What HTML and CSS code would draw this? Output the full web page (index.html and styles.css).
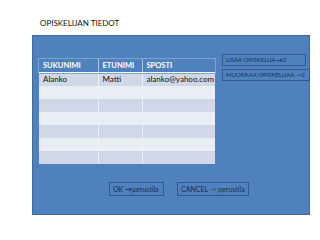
FILE: index.html
```html
<!DOCTYPE html>
<html>
<head>
<meta charset="utf-8">
<link rel="stylesheet" href="styles.css">
</head>
<body>
<div class="title">OPISKELIJAN TIEDOT</div>
<div class="panel">
  <div class="top">
    <table class="grid">
      <thead>
        <tr><th class="c1">SUKUNIMI</th><th class="c2">ETUNIMI</th><th class="c3">SPOSTI</th></tr>
      </thead>
      <tbody>
        <tr><td>Alanko</td><td>Matti</td><td>alanko@yahoo.com</td></tr>
        <tr><td></td><td></td><td></td></tr>
        <tr><td></td><td></td><td></td></tr>
        <tr><td></td><td></td><td></td></tr>
        <tr><td></td><td></td><td></td></tr>
        <tr><td></td><td></td><td></td></tr>
        <tr><td></td><td></td><td></td></tr>
      </tbody>
    </table>
    <div class="side">
      <div class="btn side-a">LISÄÄ OPISKELIJA <b>→</b>2</div>
      <div class="btn side-b">MUOKKAA OPISKELIJAA -&gt;2</div>
    </div>
  </div>
  <div class="bottom">
    <div class="btn ok">OK <b>→</b>perustila</div>
    <div class="btn cancel">CANCEL -&gt; perustila</div>
  </div>
</div>
</body>
</html>
```
FILE: styles.css
```css
html, body {
  margin: 0;
  padding: 0;
  background: #ffffff;
}
body {
  font-family: Lato, "Open Sans", "Liberation Sans", sans-serif;
  width: 320px;
  height: 240px;
  overflow: hidden;
}
.title {
  height: 35px;
  box-sizing: border-box;
  padding: 19px 0 0 40px;
  font-size: 8px;
  color: #111;
  line-height: 9px;
}
.panel {
  margin-left: 32px;
  width: 278px;
  height: 180px;
  box-sizing: border-box;
  background: #4f81bd;
  border: 1px solid #3f6a9c;
  padding: 23px 0 0 6px;
  display: flex;
  flex-direction: column;
}
.top {
  display: flex;
  align-items: flex-start;
}
.grid {
  border-collapse: collapse;
  width: 176px;
  table-layout: fixed;
  font-size: 8px;
}
.grid th, .grid td {
  height: 13px;
  padding: 0 0 0 4px;
  box-sizing: border-box;
  text-align: left;
  border-left: 1px solid #edf1f7;
  line-height: 13px;
  white-space: nowrap;
}
.grid th:first-child, .grid td:first-child {
  border-left: none;
}
.grid th {
  color: #ffffff;
  font-weight: bold;
  font-size: 7.5px;
  background: #4f81bd;
  border-left-color: #a9c0de;
  border-bottom: 1px solid #ffffff;
}
.grid thead tr {
  outline: 1px solid #7fa3d0;
}
.grid .c1 { width: 59px; }
.grid .c2 { width: 44px; }
.grid .c3 { width: 73px; }
.grid td {
  color: #111;
}
.grid tbody tr:nth-child(odd) { background: #d0d8e8; }
.grid tbody tr:nth-child(even) { background: #e9edf4; }
.side {
  margin-top: -5px;
  margin-left: 7px;
  display: flex;
  flex-direction: column;
  gap: 3px;
}
.btn {
  border: 1px solid #2f5a8c;
  color: #17305a;
  box-sizing: border-box;
  white-space: nowrap;
}
.btn b {
  font-weight: 900;
}
.side .btn {
  font-size: 6px;
  height: 12px;
  line-height: 10px;
  padding-left: 3px;
}
.side-a { width: 84px; }
.side-b { width: 88px; }
.bottom {
  display: flex;
  gap: 13px;
  padding-left: 70px;
  margin-top: 18px;
}
.bottom .btn {
  font-size: 7px;
  height: 14px;
  line-height: 12px;
  padding-left: 3px;
}
.ok { width: 55px; }
.cancel { width: 72px; }
```
